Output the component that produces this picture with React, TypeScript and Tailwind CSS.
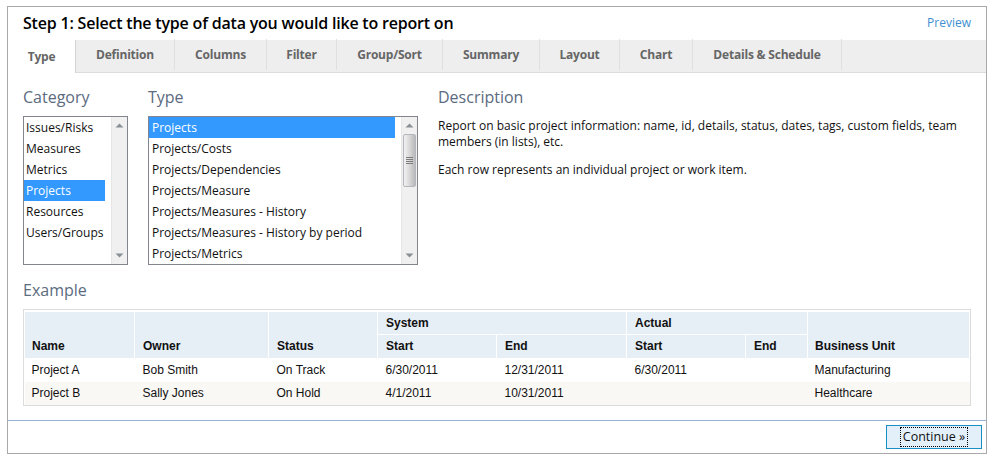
const tabs = [
  { label: "Type", w: "w-[68px]" },
  { label: "Definition", w: "w-[99px]" },
  { label: "Columns", w: "w-[92px]" },
  { label: "Filter", w: "w-[70px]" },
  { label: "Group/Sort", w: "w-[106px]" },
  { label: "Summary", w: "w-[97px]" },
  { label: "Layout", w: "w-[80px]" },
  { label: "Chart", w: "w-[73px]" },
  { label: "Details & Schedule", w: "w-[149px]" },
];

const categories = ["Issues/Risks", "Measures", "Metrics", "Projects", "Resources", "Users/Groups"];
const types = [
  "Projects",
  "Projects/Costs",
  "Projects/Dependencies",
  "Projects/Measure",
  "Projects/Measures - History",
  "Projects/Measures - History by period",
  "Projects/Metrics",
];

function Arrow({ up }: { up?: boolean }) {
  return (
    <svg width="9" height="5" viewBox="0 0 9 5" className="block">
      <path d={up ? "M4.5 0.5 L8.5 4.5 L0.5 4.5 Z" : "M0.5 0.5 L8.5 0.5 L4.5 4.5 Z"} fill="#8a8f96" />
    </svg>
  );
}

function Scrollbar({ thumb }: { thumb?: boolean }) {
  return (
    <div className="w-[16px] shrink-0 bg-[#f0f0f0] border-l border-[#e6e6e6] flex flex-col items-center">
      <div className="h-[17px] w-full flex items-center justify-center">
        <Arrow up />
      </div>
      <div className="flex-1 w-full">
        {thumb && (
          <div className="h-[53px] mx-px rounded-[2px] border border-[#b4b8bd] bg-gradient-to-r from-[#f2f2f2] via-[#d8d8d8] to-[#b9b9b9] flex flex-col items-center justify-center gap-px">
            <div className="w-[7px] h-px bg-[#7d7d7d]" />
            <div className="w-[7px] h-px bg-[#7d7d7d]" />
            <div className="w-[7px] h-px bg-[#7d7d7d]" />
            <div className="w-[7px] h-px bg-[#7d7d7d]" />
          </div>
        )}
      </div>
      <div className="h-[17px] w-full flex items-center justify-center">
        <Arrow />
      </div>
    </div>
  );
}

function ListBox({ items, selected, width, thumb, inset }: { items: string[]; selected: string; width: string; thumb?: boolean; inset: string }) {
  return (
    <div className={`${width} h-[149px] border border-[#82858e] flex bg-white overflow-hidden`}>
      <ul className="flex-1 min-w-0 pr-[6px]">
        {items.map((item) => (
          <li
            key={item}
            className={`h-[21px] ${inset} text-[12px] leading-[21px] whitespace-nowrap ${
              item === selected ? "bg-[#3399ff] text-white" : "text-[#111]"
            }`}
          >
            {item}
          </li>
        ))}
      </ul>
      <Scrollbar thumb={thumb} />
    </div>
  );
}

const th = "bg-[#e6eef6] border border-white pl-[8px] pr-[4px] text-left align-bottom font-bold text-[#111] pb-[3px]";
const thFirst = "bg-[#e6eef6] border border-white pl-[7px] pr-[4px] text-left align-bottom font-bold text-[#111] pb-[3px]";
const thGroup = "bg-[#e6eef6] border border-white pl-[8px] pr-[4px] text-left align-bottom font-bold text-[#111] pb-[2px]";
const td = "pl-[8px] pr-[4px] align-middle text-[#111]";
const tdEdge = "pl-[7px] pr-[4px] align-middle text-[#111]";

export default function App() {
  return (
    <div className="w-[998px] h-[461px] bg-white pt-[6px] pl-[7px] font-['Open_Sans',sans-serif]">
      <div className="w-[980px] h-[448px] border border-[#a8a8a8] flex flex-col">
        <div className="h-[33px] shrink-0 flex items-center justify-between pl-[15px] pr-[15px] pb-[2px]">
          <h1 className="text-[16px] font-semibold text-black tracking-[-0.2px]">Step 1: Select the type of data you would like to report on</h1>
          <a className="text-[12px] text-[#3d8fd1]">Preview</a>
        </div>

        <div className="h-[33px] shrink-0 flex bg-[#eeeeee] border-b border-[#dcdcdc]">
          {tabs.map((t, i) => (
            <div
              key={t.label}
              className={`${t.w} flex items-center justify-center text-[12px] font-bold tracking-[-0.2px] text-[#666] ${
                i === 0
                  ? "bg-white text-[#555] border-r border-[#d4d4d4] h-[33px] relative"
                  : "border-r border-[#e0e0e0] h-[31px] -mt-px"
              }`}
            >
              {t.label}
            </div>
          ))}
        </div>

        <div className="flex-1 pl-[15px] pr-[15px] flex flex-col">
          <div className="flex pt-[12px]">
            <div className="w-[125px] shrink-0">
              <h2 className="text-[16px] leading-[24px] text-[#5b6b80] mb-[7px]">Category</h2>
              <ListBox items={categories} selected="Projects" width="w-[105px]" inset="pl-[2px]" />
            </div>
            <div className="w-[290px] shrink-0">
              <h2 className="text-[16px] leading-[24px] text-[#5b6b80] mb-[7px]">Type</h2>
              <ListBox items={types} selected="Projects" width="w-[270px]" inset="pl-[3px]" thumb />
            </div>
            <div className="flex-1">
              <h2 className="text-[16px] leading-[24px] text-[#5b6b80] mb-[9px]">Description</h2>
              <p className="text-[12px] leading-[16px] text-[#111]">
                Report on basic project information: name, id, details, status, dates, tags, custom fields, team members (in lists), etc.
              </p>
              <p className="text-[12px] leading-[16px] text-[#111] mt-[12px]">Each row represents an individual project or work item.</p>
            </div>
          </div>

          <h2 className="text-[16px] leading-[24px] text-[#5b6b80] mt-[13px] mb-[7px]">Example</h2>

          <div className="w-[948px] border border-[#dcdcdc] pt-px px-px">
            <table className="w-[945px] -ml-px table-fixed border-collapse text-[12px] font-['Liberation_Sans',sans-serif]">
              <colgroup>
                <col className="w-[110px]" />
                <col className="w-[134px]" />
                <col className="w-[109px]" />
                <col className="w-[119px]" />
                <col className="w-[130px]" />
                <col className="w-[119px]" />
                <col className="w-[62px]" />
                <col className="w-[162px]" />
              </colgroup>
              <thead>
                <tr className="h-[23px]">
                  <th rowSpan={2} className={thFirst}>Name</th>
                  <th rowSpan={2} className={th}>Owner</th>
                  <th rowSpan={2} className={th}>Status</th>
                  <th colSpan={2} className={thGroup}>System</th>
                  <th colSpan={2} className={thGroup}>Actual</th>
                  <th rowSpan={2} className={thFirst}>Business Unit</th>
                </tr>
                <tr className="h-[24px]">
                  <th className={th}>Start</th>
                  <th className={th}>End</th>
                  <th className={th}>Start</th>
                  <th className={th}>End</th>
                </tr>
              </thead>
              <tbody>
                <tr className="h-[23px] bg-white">
                  <td className={tdEdge}>Project A</td>
                  <td className={td}>Bob Smith</td>
                  <td className={td}>On Track</td>
                  <td className={td}>6/30/2011</td>
                  <td className={td}>12/31/2011</td>
                  <td className={td}>6/30/2011</td>
                  <td className={td}></td>
                  <td className={tdEdge}>Manufacturing</td>
                </tr>
                <tr className="h-[23px] bg-[#faf8f5]">
                  <td className={tdEdge}>Project B</td>
                  <td className={td}>Sally Jones</td>
                  <td className={td}>On Hold</td>
                  <td className={td}>4/1/2011</td>
                  <td className={td}>10/31/2011</td>
                  <td className={td}></td>
                  <td className={td}></td>
                  <td className={tdEdge}>Healthcare</td>
                </tr>
              </tbody>
            </table>
          </div>
        </div>

        <div className="h-[33px] shrink-0 border-t border-[#9ab0d0] flex items-start justify-end pt-[4px] pr-[4px]">
          <button className="w-[96px] h-[24px] border border-[#1b8fc4] bg-[#e3f0fa] flex items-center justify-center">
            <span className="w-[68px] border border-dotted border-black h-[20px] leading-[18px] text-[12.5px] text-[#111] text-center whitespace-nowrap">Continue »</span>
          </button>
        </div>
      </div>
    </div>
  );
}
